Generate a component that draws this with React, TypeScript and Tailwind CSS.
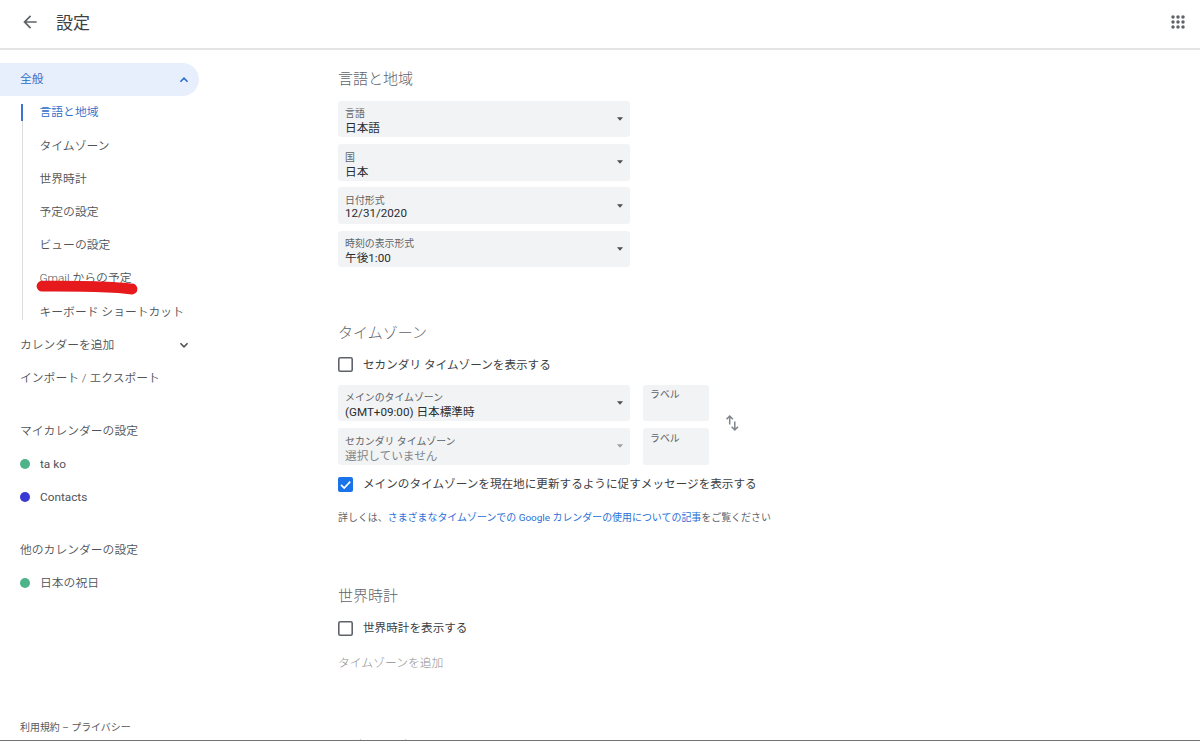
import type { ReactNode } from "react";

const GENERAL_ITEMS = [
  "言語と地域",
  "タイムゾーン",
  "世界時計",
  "予定の設定",
  "ビューの設定",
  "Gmail からの予定",
  "キーボード ショートカット",
];

export default function App() {
  return (
    <div className="flex h-[741px] w-[1200px] flex-col overflow-hidden border-b border-[#737373] bg-white font-['Roboto','Noto_Sans_CJK_JP',sans-serif] text-[#3c4043]">
      <Header />
      <div className="flex min-h-0 flex-1">
        <Sidebar />
        <main className="ml-[138px] w-[500px] shrink-0">
          <SectionTitle className="mt-[13px]">言語と地域</SectionTitle>
          <div className="mt-[6px] flex w-[292px] flex-col gap-[6.8px]">
            <SelectField label="言語" value="日本語" />
            <SelectField label="国" value="日本" />
            <SelectField label="日付形式" value="12/31/2020" raised />
            <SelectField label="時刻の表示形式" value="午後1:00" />
          </div>

          <SectionTitle className="mt-[50px]">タイムゾーン</SectionTitle>
          <CheckRow className="mt-[2px]" label="セカンダリ タイムゾーンを表示する" />
          <div className="mt-[4px] flex items-center">
            <div className="flex w-[292px] flex-col gap-[6.8px]">
              <SelectField label="メインのタイムゾーン" value="(GMT+09:00) 日本標準時" />
              <SelectField label="セカンダリ タイムゾーン" value="選択していません" disabled />
            </div>
            <div className="ml-[13px] flex w-[66px] flex-col gap-[6.8px]">
              <LabelField />
              <LabelField />
            </div>
            <SwapIcon />
          </div>
          <CheckRow
            className="mt-[5.5px]"
            label="メインのタイムゾーンを現在地に更新するように促すメッセージを表示する"
            checked
          />
          <p className="mt-[8px] h-5 whitespace-nowrap text-[9.95px] leading-5 text-[#5f6368]">
            詳しくは、
            <a className="text-[#2a70d8]">さまざまなタイムゾーンでの Google カレンダーの使用についての記事</a>
            をご覧ください
          </p>

          <SectionTitle className="mt-[52px]">世界時計</SectionTitle>
          <CheckRow className="mt-[2px]" label="世界時計を表示する" />
          <div className="mt-[9px] h-5 text-[11.8px] font-light leading-5 text-[#8f8f8f]">タイムゾーンを追加</div>

          <SectionTitle className="mt-[58px]">予定の設定</SectionTitle>
        </main>
      </div>
    </div>
  );
}

function Header() {
  return (
    <header className="flex h-[50px] shrink-0 items-center border-b-2 border-[#e4e4e2] pb-[4px]">
      <svg className="ml-[20px] h-5 w-5 text-[#5f6368]" viewBox="0 0 24 24" fill="currentColor">
        <path d="M20 11H7.83l5.59-5.59L12 4l-8 8 8 8 1.41-1.41L7.83 13H20v-2z" />
      </svg>
      <h1 className="ml-[16px] pt-[2px] text-[17px] leading-6">設定</h1>
      <svg className="ml-auto mr-[12px] h-5 w-5 text-[#5f6368]" viewBox="0 0 24 24" fill="currentColor">
        {[6, 12, 18].map((y) => [6, 12, 18].map((x) => <circle key={`${x}-${y}`} cx={x} cy={y} r="2.1" />))}
      </svg>
    </header>
  );
}

function Sidebar() {
  return (
    <aside className="flex w-[200px] shrink-0 flex-col pt-[13px] text-[11.8px] font-[350] text-[#505357]">
      <div className="flex h-[33px] w-[199px] items-center justify-between rounded-r-full bg-[#e8effc] pl-5 pr-[10px] text-[#2a6cc9]">
        全般
        <Chevron up />
      </div>
      <nav className="relative ml-[22px]">
        <div className="absolute top-2 bottom-2 left-0 w-px bg-[#dadce0]" />
        <div className="absolute top-[8px] left-[-1px] h-[17px] w-[2px] bg-[#3a76cf]" />
        {GENERAL_ITEMS.map((item, i) => (
          <div
            key={item}
            className={`flex h-[33.2px] items-center whitespace-nowrap pl-[17.5px] pt-[1.4px] ${i === 0 ? "text-[#2a6cc9]" : ""}`}
          >
            {item}
          </div>
        ))}
        <RedMarker />
      </nav>
      <div className="flex h-[33px] w-[199px] items-center justify-between pl-5 pr-[10px]">
        <span className="pt-[2px]">カレンダーを追加</span>
        <Chevron />
      </div>
      <div className="flex h-[33px] items-center pl-5 pt-[2px]">インポート / エクスポート</div>

      <div className="mt-5 flex h-[33px] items-center pl-5 pt-[2px]">マイカレンダーの設定</div>
      <CalendarItem color="bg-[#4db389]" name="ta ko" />
      <CalendarItem color="bg-[#3b39d3]" name="Contacts" />

      <div className="mt-5 flex h-[33px] items-center pl-5 pt-[2px]">他のカレンダーの設定</div>
      <CalendarItem color="bg-[#4db389]" name="日本の祝日" />

      <footer className="mt-auto mb-[2px] pl-5 text-[9.95px] font-normal leading-5 text-[#55585c]">
        利用規約 – プライバシー
      </footer>
    </aside>
  );
}

function CalendarItem({ color, name }: { color: string; name: string }) {
  return (
    <div className="flex h-[33.2px] items-center gap-[10px] pl-5">
      <span className={`h-[10px] w-[10px] rounded-full ${color}`} />
      <span className={`pt-[2px] ${/^[a-z ]+$/i.test(name) ? "font-normal" : ""}`}>{name}</span>
    </div>
  );
}

// Hand-drawn stroke under the Gmail entry
function RedMarker() {
  return (
    <svg className="absolute left-[13px] top-[182px] h-[18px] w-[104px]" viewBox="0 0 104 18" fill="none">
      <path d="M7 8.2 C 30 8, 55 8.4, 72 9.1 S 92 10.6, 97 11" stroke="#e6191c" strokeWidth="10.8" strokeLinecap="round" />
    </svg>
  );
}

function Chevron({ up = false }: { up?: boolean }) {
  return (
    <svg className="h-[10px] w-[10px]" viewBox="0 0 10 10" fill="none" stroke="currentColor" strokeWidth="1.6">
      <path d={up ? "M1.4 6.8 L5 3.2 L8.6 6.8" : "M1.4 3.2 L5 6.8 L8.6 3.2"} />
    </svg>
  );
}

function SectionTitle({ className, children }: { className: string; children: ReactNode }) {
  return <h2 className={`h-8 text-[15px] font-light leading-8 text-[#5f6368] ${className}`}>{children}</h2>;
}

interface SelectFieldProps {
  label: string;
  value: string;
  disabled?: boolean;
  raised?: boolean;
}

function SelectField({ label, value, disabled = false, raised = false }: SelectFieldProps) {
  return (
    <div className="flex h-[36.4px] items-center justify-between rounded-[3px] bg-[#f1f3f4] pl-[7px] pr-[7px]">
      <div className="pt-[4.6px]">
        <div className="h-[14px] text-[9.9px] leading-[14px] text-[#5f6368]">{label}</div>
        <div
          className={`h-[14px] text-[11.65px] ${raised ? "leading-[10px]" : "leading-[14px]"} ${
            disabled ? "text-[#80868b]" : "text-[#2b2d30]"
          }`}
        >
          {value}
        </div>
      </div>
      <svg className={`h-[4px] w-[6px] ${disabled ? "text-[#9aa0a6]" : "text-[#4b4f53]"}`} viewBox="0 0 6 4">
        <path d="M0 0.3h6L3 3.7z" fill="currentColor" />
      </svg>
    </div>
  );
}

function LabelField() {
  return (
    <div className="h-[36.4px] rounded-[3px] bg-[#f1f3f4] pl-[7px] pt-[3.5px] text-[9.9px] leading-[14px] text-[#5f6368]">
      ラベル
    </div>
  );
}

function SwapIcon() {
  return (
    <svg
      className="mb-[3px] ml-[16px] h-4 w-4 text-[#80868b]"
      viewBox="0 0 16 16"
      fill="none"
      stroke="currentColor"
      strokeWidth="1.5"
    >
      <path d="M4.7 9.5V1.4M1.5 4.3l3.2-3.2 3.2 3.2M9.8 6.5v8.1M6.6 11.7l3.2 3.2 3.2-3.2" />
    </svg>
  );
}

function CheckRow({ className, label, checked = false }: { className: string; label: string; checked?: boolean }) {
  return (
    <div className={`flex h-[30px] items-center gap-[10px] whitespace-nowrap text-[11.61px] ${className}`}>
      {checked ? (
        <svg className="mb-[2px] h-[15px] w-[15px] shrink-0 rounded-[2px] bg-[#1a73e8]" viewBox="0 0 15 15" fill="none">
          <path d="M3 7.8l3.2 3.2 6-6.3" stroke="white" strokeWidth="1.7" />
        </svg>
      ) : (
        <svg className="mb-[2px] h-[15px] w-[15px] shrink-0" viewBox="0 0 15 15" fill="none">
          <rect x="0.8" y="0.8" width="13.4" height="13.4" rx="1.4" stroke="#5f6368" strokeWidth="1.6" />
        </svg>
      )}
      {label}
    </div>
  );
}
